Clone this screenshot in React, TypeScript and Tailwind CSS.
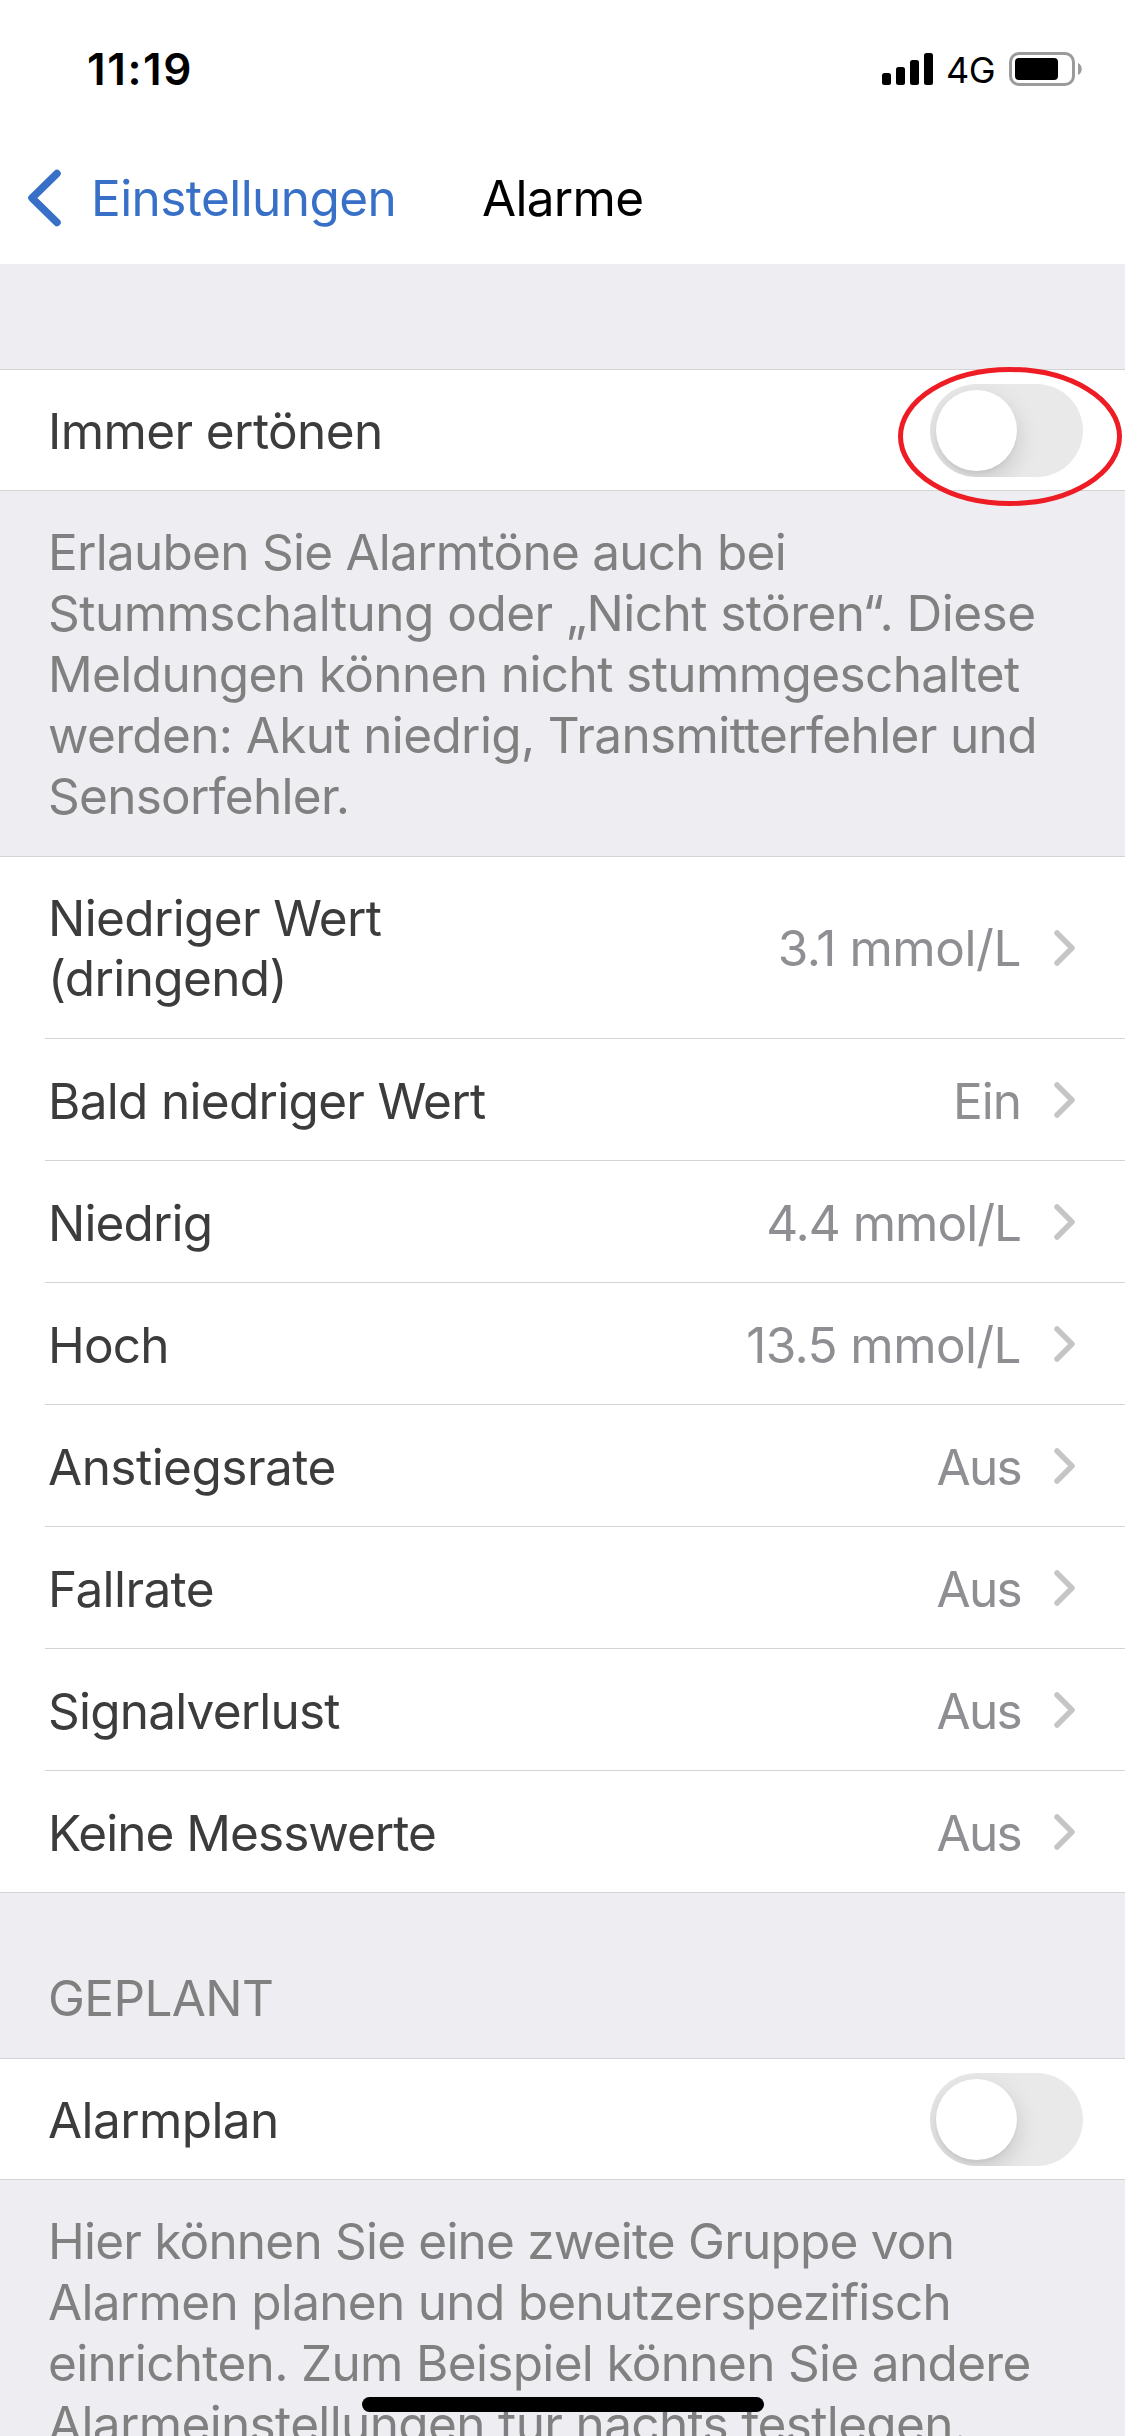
import type { ReactNode } from 'react';

const alarms = [
  { label: 'Bald niedriger Wert', labelTracking: 'tracking-[-0.7px]', value: 'Ein', valueTracking: 'tracking-[-0.99px]' },
  { label: 'Niedrig', labelTracking: 'tracking-[-0.85px]', value: '4.4 mmol/L', valueTracking: 'tracking-[-0.99px]' },
  { label: 'Hoch', labelTracking: 'tracking-[-0.8px]', value: '13.5 mmol/L', valueTracking: 'tracking-[-0.6px]' },
  { label: 'Anstiegsrate', labelTracking: 'tracking-[-0.52px]', value: 'Aus', valueTracking: 'tracking-[-1.7px]' },
  { label: 'Fallrate', labelTracking: 'tracking-[-0.6px]', value: 'Aus', valueTracking: 'tracking-[-1.7px]' },
  { label: 'Signalverlust', labelTracking: 'tracking-[-0.8px]', value: 'Aus', valueTracking: 'tracking-[-1.7px]' },
  { label: 'Keine Messwerte', labelTracking: 'tracking-[-0.97px]', value: 'Aus', valueTracking: 'tracking-[-1.7px]' },
];

function StatusBar() {
  return (
    <div className="flex h-[138px] items-start justify-between pl-[87px] pr-[43px]">
      <span className="mt-[41px] text-[44px] font-semibold leading-[56px] tracking-[1.6px]">11:19</span>
      <div className="mt-[52px] flex h-[34px] items-start">
        <svg width="51" height="33" viewBox="0 0 51 33">
          <rect x="0" y="21" width="9" height="12" rx="2.5" />
          <rect x="14" y="15" width="9" height="18" rx="2.5" />
          <rect x="28" y="8" width="9" height="25" rx="2.5" />
          <rect x="42" y="1" width="9" height="32" rx="2.5" />
        </svg>
        <span className="ml-[13px] mt-[-2px] w-[63px] text-[36px] leading-[40px] tracking-[-0.5px]">4G</span>
        <svg width="73" height="34" viewBox="0 0 73 34">
          <rect x="1.5" y="1.5" width="63" height="31" rx="8.5" fill="none" stroke="#9b9b9b" strokeWidth="3" />
          <rect x="6" y="6" width="43" height="22" rx="4" />
          <path d="M69 11c5 2 5 10 0 12z" fill="#9b9b9b" />
        </svg>
      </div>
    </div>
  );
}

function NavBar() {
  return (
    <div className="flex h-[126px] items-center pb-[6px] pl-[27px]">
      <svg width="36" height="58" viewBox="0 0 36 58" fill="none" stroke="#3870c8" strokeWidth="7.5" strokeLinecap="round" strokeLinejoin="round">
        <path d="M30 4.500L5 29L30 53.500" />
      </svg>
      <span className="ml-[28px] w-[391px] leading-[60px] tracking-[-0.57px] text-[#3870c8]">Einstellungen</span>
      <h1 className="font-normal leading-[60px] tracking-[-0.7px]">Alarme</h1>
    </div>
  );
}

function Toggle() {
  return (
    <div className="h-[93px] w-[153px] overflow-hidden rounded-full bg-[#e9e9e9] p-[6px]">
      <div className="h-[81px] w-[81px] rounded-full bg-white shadow-[0_9px_24px_rgba(0,0,0,0.15),0_3px_3px_rgba(0,0,0,0.04)]" />
    </div>
  );
}

function Chevron() {
  return (
    <svg className="ml-[32px]" width="23" height="38" viewBox="0 0 23 38" fill="none" stroke="#c5c5c7" strokeWidth="5.500" strokeLinecap="round" strokeLinejoin="round">
      <path d="M4 4L19 19L4 34" />
    </svg>
  );
}

function ToggleRow({ label, children }: { label: string; children?: ReactNode }) {
  return (
    <div className="flex h-[122px] items-center justify-between border-y border-[#d4d4d6] bg-white pl-[48px] pr-[42px]">
      <span className="pt-[2px] leading-[60px] tracking-[-0.6px] text-[#3c3c3d]">{label}</span>
      <div className="relative">
        <Toggle />
        {children}
      </div>
    </div>
  );
}

type ValueRowProps = { label: string; labelTracking: string; value: string; valueTracking: string };

function ValueRow({ label, labelTracking, value, valueTracking }: ValueRowProps) {
  return (
    <div className="ml-[45px] flex h-[122px] items-center border-t border-[#d4d4d6] pl-[3px] pr-[49px]">
      <span className={`flex-1 pt-[2px] leading-[60px] text-[#3c3c3d] ${labelTracking}`}>{label}</span>
      <span className={`pt-[2px] leading-[60px] text-[#8e8e93] ${valueTracking}`}>{value}</span>
      <Chevron />
    </div>
  );
}

export default function App() {
  return (
    <div className="relative h-[2436px] w-[1125px] overflow-hidden bg-[#eeedf2] font-['Inter',sans-serif] text-[49.5px] tracking-[-0.99px] text-black">
      <header className="h-[264px] bg-white">
        <StatusBar />
        <NavBar />
      </header>

      <section className="pt-[105px]">
        <ToggleRow label="Immer ertönen">
          <svg className="absolute -left-[32px] -top-[17px] max-w-none" width="224" height="139" viewBox="0 0 224 139">
            <ellipse cx="112" cy="69.500" rx="109.500" ry="67" fill="none" stroke="#ee1c24" strokeWidth="5" />
          </svg>
        </ToggleRow>
        <p className="flex h-[365px] flex-col whitespace-nowrap pl-[48px] pt-[31px] leading-[61px] text-[#808080]">
          <span className="tracking-[-0.74px]">Erlauben Sie Alarmtöne auch bei</span>
          <span className="tracking-[-0.52px]">Stummschaltung oder „Nicht stören“. Diese</span>
          <span className="tracking-[-0.6px]">Meldungen können nicht stummgeschaltet</span>
          <span className="tracking-[-0.64px]">werden: Akut niedrig, Transmitterfehler und</span>
          <span className="tracking-[-0.73px]">Sensorfehler.</span>
        </p>
      </section>

      <section className="border-y border-[#d4d4d6] bg-white">
        <div className="flex h-[181px] items-center pl-[48px] pr-[49px]">
          <span className="flex-1 leading-[60px] tracking-[-0.64px] text-[#3c3c3d]">
            Niedriger Wert
            <br />
            (dringend)
          </span>
          <span className="leading-[60px] tracking-[-0.44px] text-[#8e8e93]">3.1 mmol/L</span>
          <Chevron />
        </div>
        {alarms.map((alarm) => (
          <ValueRow key={alarm.label} {...alarm} />
        ))}
      </section>

      <section>
        <h2 className="h-[165px] pl-[48px] pt-[75px] font-normal leading-[61px] tracking-[-0.64px] text-[#808080]">GEPLANT</h2>
        <ToggleRow label="Alarmplan" />
        <p className="flex flex-col whitespace-nowrap pl-[48px] pt-[31px] leading-[61px] text-[#808080]">
          <span className="tracking-[-0.79px]">Hier können Sie eine zweite Gruppe von</span>
          <span className="tracking-[-0.69px]">Alarmen planen und benutzerspezifisch</span>
          <span className="tracking-[-0.67px]">einrichten. Zum Beispiel können Sie andere</span>
          <span className="tracking-[-0.65px]">Alarmeinstellungen für nachts festlegen.</span>
        </p>
      </section>

      <div className="absolute left-[362px] top-[2397px] h-[15px] w-[402px] rounded-full bg-black" />
    </div>
  );
}
